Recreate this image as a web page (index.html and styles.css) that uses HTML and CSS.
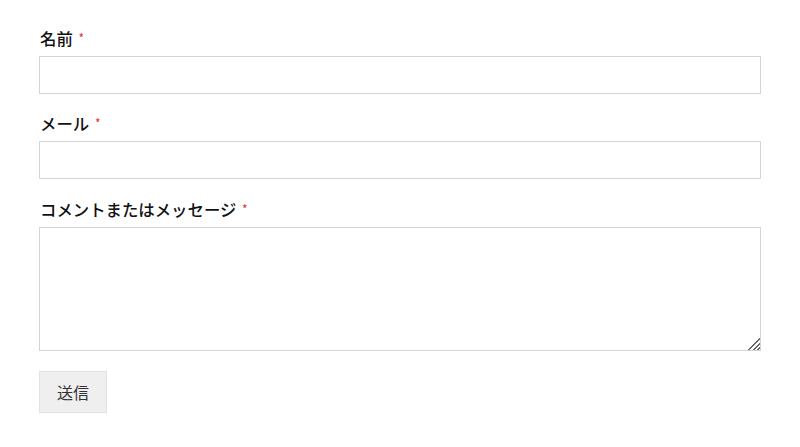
FILE: index.html
```html
<!DOCTYPE html>
<html lang="ja">
<head>
  <meta charset="UTF-8" />
  <meta name="viewport" content="width=device-width, initial-scale=1.0" />
  <title>お問い合わせ</title>
  <link rel="stylesheet" href="styles.css">
</head>
<body>

  <form class="contact-form" onsubmit="return false;">
    <div class="field">
      <label for="name">名前 <span class="required">*</span></label>
      <input id="name" class="text-input" type="text">
    </div>
    <div class="field">
      <label for="email">メール <span class="required">*</span></label>
      <input id="email" class="text-input" type="email">
    </div>
    <div class="field">
      <label for="message">コメントまたはメッセージ <span class="required">*</span></label>
      <textarea id="message" class="text-area"></textarea>
    </div>
    <button class="submit-btn" type="submit">送信</button>
  </form>

</body>
</html>
```

FILE: styles.css
```css
* {
  box-sizing: border-box;
  margin: 0;
  padding: 0;
}
html, body {
  background: #fff;
  color: #111;
  font-family: "Noto Sans CJK JP", "Noto Sans", sans-serif;
}

.contact-form {
  padding: 26px 39px 0 39px;
}
.field {
  margin-bottom: 17px;
}
.field:nth-child(2) {
  margin-bottom: 18px;
}
.field label {
  display: block;
  font-size: 16.4px;
  font-weight: 500;
  line-height: 24px;
  margin-bottom: 6px;
  padding-left: 1px;
}
.required {
  color: #e0303a;
  font-size: 12px;
  font-weight: 400;
  margin-left: 2px;
  vertical-align: 2px;
}
.text-input {
  display: block;
  width: 100%;
  height: 38px;
  border: 1px solid #d4d4d4;
  background: #fff;
  font-size: 16px;
  padding: 0 10px;
}
.text-area {
  display: block;
  width: 100%;
  height: 124px;
  border: 1px solid #d4d4d4;
  background: #fff;
  font-size: 16px;
  padding: 8px 10px;
  resize: vertical;
}
.text-area::-webkit-resizer {
  background:
    linear-gradient(135deg, #fff 50%, transparent 50%),
    repeating-linear-gradient(135deg, #fff 0 2px, #666 2px 3.4px);
}
.text-input:focus, .text-area:focus {
  outline: none;
}
.submit-btn {
  margin-top: 3px;
  height: 42px;
  padding: 0 17px;
  background: #efefef;
  border: 1px solid #e2e2e2;
  color: #333;
  font-family: "Noto Sans CJK JP", sans-serif;
  font-size: 16px;
  cursor: pointer;
}
```
